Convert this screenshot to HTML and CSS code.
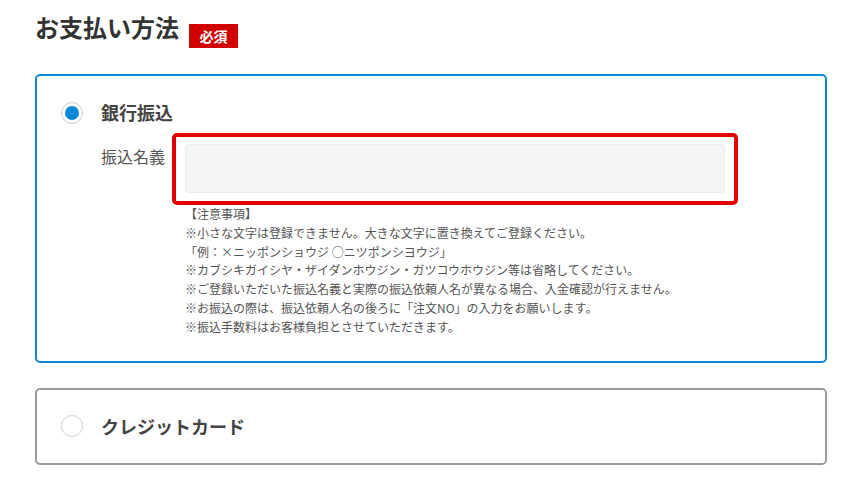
FILE: index.html
```html
<!DOCTYPE html>
<html lang="ja">
<head>
  <meta charset="UTF-8" />
  <meta name="viewport" content="width=device-width, initial-scale=1" />
  <title>お支払い方法</title>
  <link rel="stylesheet" href="styles.css">
</head>
<body>
  <div class="payment">
    <div class="payment-header">
      <h2>お支払い方法</h2>
      <span class="required">必須</span>
    </div>

    <!-- 銀行振込 -->
    <div class="method selected">
      <label class="method-title">
        <span class="radio checked"></span>
        銀行振込
      </label>
      <div class="field-row">
        <div class="field-label">振込名義</div>
        <div class="field-error">
          <input type="text" class="field-input">
        </div>
      </div>
      <div class="notes">
        <p>【注意事項】</p>
        <p>※小さな文字は登録できません。大きな文字に置き換えてご登録ください。</p>
        <p>「例：×ニッポンショウジ ○ニツポンシヨウジ」</p>
        <p>※カブシキガイシヤ・ザイダンホウジン・ガツコウホウジン等は省略してください。</p>
        <p>※ご登録いただいた振込名義と実際の振込依頼人名が異なる場合、入金確認が行えません。</p>
        <p>※お振込の際は、振込依頼人名の後ろに「注文NO」の入力をお願いします。</p>
        <p>※振込手数料はお客様負担とさせていただきます。</p>
      </div>
    </div>

    <!-- クレジットカード -->
    <div class="method">
      <label class="method-title">
        <span class="radio"></span>
        クレジットカード
      </label>
    </div>
  </div>
</body>
</html>
```

FILE: styles.css
```css
body {
  margin: 0;
  font-family: "Noto Sans CJK JP", "Noto Sans", sans-serif;
  background-color: #fff;
  color: #333;
}

.payment {
  padding: 12px 36px 0 35px;
}

/* Header */
.payment-header {
  display: flex;
  align-items: flex-start;
  margin-bottom: 26px;
}

.payment-header h2 {
  margin: 0;
  font-size: 24px;
  line-height: 30px;
  font-weight: 700;
  color: #333;
}

.required {
  margin: 12px 0 0 10px;
  width: 49px;
  height: 24px;
  background-color: #d10000;
  color: #fff;
  font-size: 14px;
  font-weight: 700;
  line-height: 24px;
  text-align: center;
}

/* Method cards */
.method {
  border: 2px solid #989ba1;
  border-radius: 5px;
  padding: 24px;
  margin-bottom: 25px;
}

.method.selected {
  border-color: #0c8ad8;
}

.method-title {
  display: flex;
  align-items: center;
  gap: 18px;
  font-size: 18px;
  line-height: 25px;
  font-weight: 700;
  color: #444;
}

.radio {
  width: 20px;
  height: 20px;
  border: 1px solid #cfcfcf;
  border-radius: 50%;
  background-color: #fff;
  position: relative;
}

.radio.checked::after {
  content: "";
  position: absolute;
  top: 3px;
  left: 3px;
  width: 14px;
  height: 14px;
  border-radius: 50%;
  background-color: #0a87d6;
}

/* Name field */
.field-row {
  display: flex;
  margin-top: 8px;
  margin-left: 40px;
}

.field-label {
  width: 71px;
  padding-top: 11px;
  font-size: 16px;
  line-height: 24px;
  color: #555;
}

.field-error {
  width: 540px;
  padding: 7px 9px 8px 9px;
  border: 4px solid #e00000;
  border-radius: 5px;
}

.field-input {
  display: block;
  box-sizing: border-box;
  width: 100%;
  height: 49px;
  margin: 0;
  background-color: #f5f5f5;
  border: 1px solid #ececec;
  border-radius: 4px;
}

.notes {
  margin-left: 124px;
  font-size: 12px;
  line-height: 18.8px;
  color: #555;
}

.notes p {
  margin: 0;
}
```
